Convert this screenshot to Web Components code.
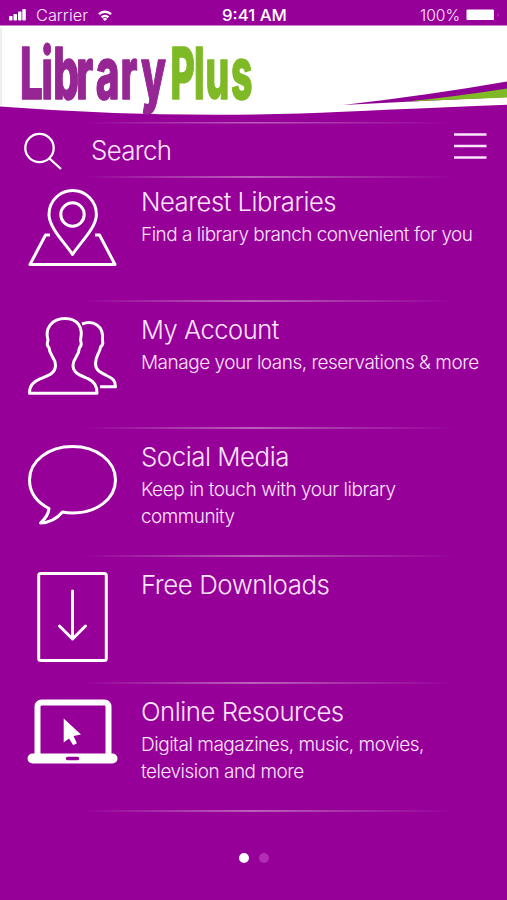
<!DOCTYPE html>
<html lang="en">

<head>
    <meta charset="UTF-8">
    <meta name="viewport" content="width=device-width, initial-scale=1.0">
    <title>LibraryPlus</title>
    <style>
        :root {
            --bg: #960099;
            --fg: #fde4ff;
            --logo-purple: #962693;
            --logo-green: #7fba26;
        }
        body {
            margin: 0;
            background: var(--bg);
            color: var(--fg);
            font-family: Inter, "Liberation Sans", sans-serif;
            font-weight: 300;
        }
    </style>
</head>

<body>
    <library-app>
        <status-bar></status-bar>
        <brand-header></brand-header>
        <search-bar><fit-text width="80">Search</fit-text></search-bar>
        <menu-item icon="map">
            <fit-text slot="title" width="195">Nearest Libraries</fit-text>
            <fit-text width="331">Find a library branch convenient for you</fit-text>
        </menu-item>
        <menu-item icon="people">
            <fit-text slot="title" width="138">My Account</fit-text>
            <fit-text width="338">Manage your loans, reservations &amp; more</fit-text>
        </menu-item>
        <menu-item icon="bubble">
            <fit-text slot="title" width="148">Social Media</fit-text>
            <fit-text width="255">Keep in touch with your library</fit-text>
            <fit-text width="94">community</fit-text>
        </menu-item>
        <menu-item icon="download">
            <fit-text slot="title" width="188">Free Downloads</fit-text>
        </menu-item>
        <menu-item icon="laptop">
            <fit-text slot="title" width="203">Online Resources</fit-text>
            <fit-text width="283">Digital magazines, music, movies,</fit-text>
            <fit-text width="163">television and more</fit-text>
        </menu-item>
        <page-dots></page-dots>
    </library-app>

    <script>
        const icons = {
            map: `<path d="M72.500 254.500C66 244 49 228 49 214.500a23.700 24 0 0 1 47.400 0C96.400 228 79 244 72.500 254.500z"/>
                <circle cx="72.500" cy="214.500" r="11.700"/>
                <path d="M50 235h-4.500L30 264.500h85L99.500 235H95"/>`,
            people: `<path d="M29.500 393.200H97c0-8-3-11.500-9-14.500-8-3.500-15-5.500-15-13.500 0-7 6-9 6.500-17.500 2-2 2-5 1-7.500 3-13-3-21.700-15.500-21.700-13 0-20.500 9.700-17 21.700-1 2.500-1 5.500 1 7.500.5 8.500 6.500 9.500 6.500 17.500s-7 10.500-15 13.500c-7 3-11 6.500-11 14.500z"/>
                <path d="M82 324c11-4 22 1 20.500 16.500.5 2 0 5-2 6.500-.5 6.500-5 8-5 16.500 0 7 5 9 11 12 6.500 3 9 5 9 11.200h-15.500"/>`,
            bubble: `<path d="M49 508.500C37.500 502.500 29.500 493 29.500 480c0-19 19-33.500 43-33.500s43 14.500 43 33.500-19 33-43 33c-4 0-7-.4-10-1-5 6-12 10.500-22 11 5-4.500 8-9 8.500-14.500z"/>`,
            download: `<rect x="38.700" y="573.500" width="67.600" height="87" rx="2"/>
                <path d="M72.500 591v48M59.500 626l13 13 13-13" stroke-linecap="round"/>`,
            laptop: `<path d="M37.500 756v-49.500a4 4 0 0 1 4-4h63a4 4 0 0 1 4 4V756" stroke-width="6"/>
                <path d="M63.700 718.500v24l5.300-4 4.200 6.800 3.700-2-3.400-7.300 7.500-1.500z" fill="#fff" stroke="none"/>
                <path d="M32.500 753.500h80a4.700 4.700 0 0 1 0 10h-80a4.700 4.700 0 0 1 0-10zm35 3.300a1.500 1.500 0 0 0 0 3.500h10a1.500 1.500 0 0 0 0-3.500z" fill="#fff" fill-rule="evenodd" stroke="none"/>`
        };
        // top edge of every icon's view box
        const iconTops = { map: 178, people: 306, bubble: 433, download: 561, laptop: 688 };

        // one line of text, squeezed or stretched to the given width
        customElements.define('fit-text', class extends HTMLElement {
            constructor() {
                super();
                this.attachShadow({ mode: 'open' });
                this.shadowRoot.innerHTML = `
                    <style>
                        :host { display: block; white-space: nowrap; }
                        span { display: inline-block; transform-origin: 0 50%; }
                    </style>
                    <span><slot></slot></span>
                `;
            }
            fit() {
                const span = this.shadowRoot.querySelector('span');
                const ratio = this.getAttribute('width') / span.offsetWidth;
                span.style.transform = `scaleX(${ratio})`;
            }
        });

        customElements.define('library-app', class extends HTMLElement {
            constructor() {
                super();
                this.attachShadow({ mode: 'open' });
                this.shadowRoot.innerHTML = `
                    <style>
                        :host {
                            display: flex;
                            flex-direction: column;
                            height: 900px;
                            overflow: hidden;
                        }
                    </style>
                    <slot></slot>
                `;
            }
        });

        customElements.define('status-bar', class extends HTMLElement {
            constructor() {
                super();
                this.attachShadow({ mode: 'open' });
                this.shadowRoot.innerHTML = `
                    <style>
                        :host {
                            display: grid;
                            grid-template-columns: 1fr auto 1fr;
                            align-items: center;
                            height: 25px;
                            box-sizing: border-box;
                            padding: 5px 7px 0 9px;
                            font-size: 16px;
                            line-height: 20px;
                        }
                        div { display: flex; align-items: center; }
                        .right { justify-content: flex-end; gap: 6px; }
                        .time { font-weight: 500; color: #fff; }
                        .carrier { margin: 0 10px 0 10px; }
                    </style>
                    <div>
                        <svg width="17" height="12" viewBox="0 0 17 12" fill="#fff">
                            <rect y="7" width="3.500" height="4.500" rx=".8"/>
                            <rect x="4.500" y="5" width="3.500" height="6.500" rx=".8"/>
                            <rect x="9" y="2.500" width="3.500" height="9" rx=".8"/>
                            <rect x="13.300" y="0" width="3.500" height="11.500" rx=".8"/>
                        </svg>
                        <fit-text class="carrier" width="52" style="width:52px">Carrier</fit-text>
                        <svg width="14" height="12" viewBox="0 0 14 12" fill="none" stroke="#fff" stroke-width="2.400">
                            <path d="M1 5.200a8.500 8.500 0 0 1 12 0M3.700 8.300a4.700 4.700 0 0 1 6.600 0"/>
                            <path d="M7 12L4.900 9.900a3 3 0 0 1 4.200 0z" fill="#fff" stroke="none"/>
                        </svg>
                    </div>
                    <fit-text class="time" width="65" style="width:65px">9:41 AM</fit-text>
                    <div class="right">
                        <fit-text width="40" style="width:40px">100%</fit-text>
                        <svg width="34" height="12" viewBox="0 0 34 12">
                            <rect x=".5" y=".5" width="27.500" height="10.500" rx="1" fill="#fff"/>
                            <path d="M31.500 4c1.500.5 1.500 3.500 0 4z" fill="#b04ab2"/>
                        </svg>
                    </div>
                `;
            }
        });

        customElements.define('brand-header', class extends HTMLElement {
            constructor() {
                super();
                this.attachShadow({ mode: 'open' });
                this.shadowRoot.innerHTML = `
                    <style>
                        :host { display: block; height: 97px; }
                        svg { display: block; }
                        text {
                            font-family: Inter, "Liberation Sans", sans-serif;
                            font-size: 72px;
                            font-weight: 800;
                            stroke-width: 1.500px;
                            stroke-linejoin: round;
                        }
                        .library { fill: var(--logo-purple); stroke: var(--logo-purple); }
                        .plus { fill: var(--logo-green); stroke: var(--logo-green); }
                    </style>
                    <svg width="507" height="97" viewBox="0 25 507 97">
                        <path d="M0 25.500H507V104.700Q380 110 300 113.500Q150 118 0 106.500z" fill="#fff"/>
                        <path d="M0 28h2v77H0z" fill="#eee"/>
                        <path d="M343 105Q430 95 507 81.500V97Q420 101 343 105z" fill="#910094"/>
                        <path d="M407 101.500Q460 96 507 88.500V97.500z" fill="#7fba26"/>
                        <text class="library" transform="scale(.56 1)" y="99" x="35.500 74 95 136 171 215 252">Library</text>
                        <text class="plus" transform="scale(.52 1)" y="99" x="328 373 395 444">Plus</text>
                    </svg>
                `;
            }
        });

        const rule = `linear-gradient(90deg, transparent 16%, #a937ab 34%, #bb5fbd 50%, #a937ab 66%, transparent 90%)`;

        customElements.define('search-bar', class extends HTMLElement {
            constructor() {
                super();
                this.attachShadow({ mode: 'open' });
                this.shadowRoot.innerHTML = `
                    <style>
                        :host {
                            display: flex;
                            box-sizing: border-box;
                            height: 56px;
                            padding: 0 20px 0 23px;
                            background: ${rule} 0 0 / 100% 1.500px no-repeat, ${rule} 0 100% / 100% 2px no-repeat;
                            font-size: 26.500px;
                            letter-spacing: -.025em;
                            line-height: 32px;
                        }
                        .label { flex: 1; margin: 12px 0 0 28px; }
                        .glass { margin-top: 9px; }
                        .bars { margin-top: 10px; }
                    </style>
                    <svg class="glass" width="40" height="40" viewBox="23 131 40 40" fill="none" stroke="#fff" stroke-width="2.300">
                        <circle cx="39.500" cy="148" r="14.200"/>
                        <path d="M49.500 158.500L61 169"/>
                    </svg>
                    <div class="label"><slot></slot></div>
                    <svg class="bars" width="33" height="28" viewBox="0 0 33 28" stroke="currentColor" stroke-width="2.700">
                        <path d="M0 2.500H32.500M0 14H32.500M0 25.500H32.500"/>
                    </svg>
                `;
            }
        });

        customElements.define('menu-item', class extends HTMLElement {
            constructor() {
                super();
                this.attachShadow({ mode: 'open' });
                const name = this.getAttribute('icon');
                this.shadowRoot.innerHTML = `
                    <style>
                        :host {
                            display: flex;
                            flex: none;
                            box-sizing: border-box;
                            height: 127.500px;
                            padding-left: 25px;
                            background: ${rule} 0 100% / 100% 2px no-repeat;
                            font-size: 18.700px;
                            letter-spacing: -.025em;
                            line-height: 27px;
                        }
                        :host([icon=map]) { height: 123.500px; }
                        svg { flex: none; }
                        .text { padding: 12px 0 0 21px; }
                        :host([icon=map]) .text { padding-top: 8px; }
                        :host(:not([icon=map])) svg { margin-top: 4px; }
                        .title { font-size: 26px; line-height: 32px; margin-bottom: 3px; }
                    </style>
                    <svg width="95" height="105" viewBox="25 ${iconTops[name]} 95 105" fill="none" stroke="#fff" stroke-width="3" stroke-linejoin="round">${icons[name]}</svg>
                    <div class="text">
                        <div class="title"><slot name="title"></slot></div>
                        <slot></slot>
                    </div>
                `;
            }
        });

        customElements.define('page-dots', class extends HTMLElement {
            constructor() {
                super();
                this.attachShadow({ mode: 'open' });
                this.shadowRoot.innerHTML = `
                    <style>
                        :host { display: flex; justify-content: center; gap: 10px; padding-top: 41px; }
                        i { width: 10px; height: 10px; border-radius: 50%; background: #b32eb6; }
                        i:first-of-type { background: #fff; }
                    </style>
                    <i></i><i></i>
                `;
            }
        });

        // the status bar keeps its own texts in its shadow root
        [document, document.querySelector('status-bar').shadowRoot].forEach((root) => {
            root.querySelectorAll('fit-text').forEach((el) => el.fit());
        });
    </script>
</body>

</html>
